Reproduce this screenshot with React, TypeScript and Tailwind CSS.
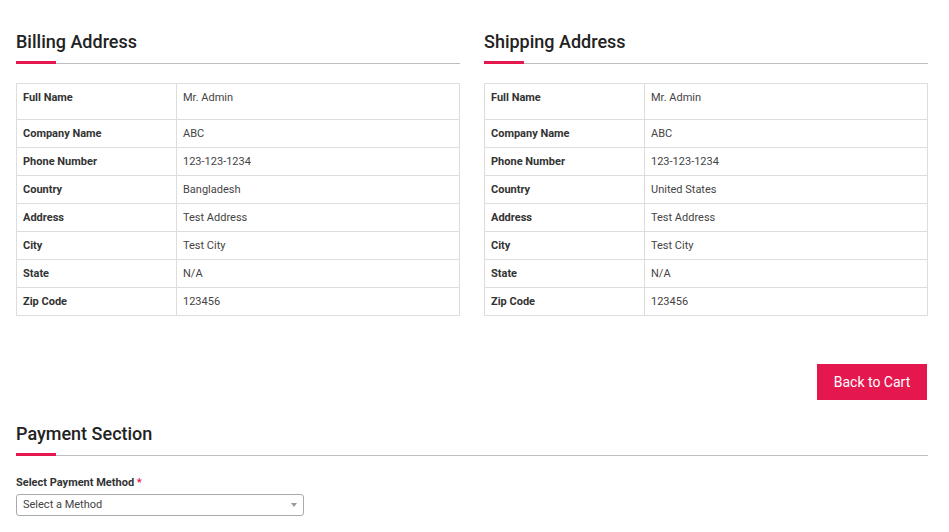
const billing = [
  ['Full Name', 'Mr. Admin'],
  ['Company Name', 'ABC'],
  ['Phone Number', '123-123-1234'],
  ['Country', 'Bangladesh'],
  ['Address', 'Test Address'],
  ['City', 'Test City'],
  ['State', 'N/A'],
  ['Zip Code', '123456'],
];

const shipping = [
  ['Full Name', 'Mr. Admin'],
  ['Company Name', 'ABC'],
  ['Phone Number', '123-123-1234'],
  ['Country', 'United States'],
  ['Address', 'Test Address'],
  ['City', 'Test City'],
  ['State', 'N/A'],
  ['Zip Code', '123456'],
];

const SectionTitle = ({ title }: { title: string }) => (
  <div>
    <h3 className="text-[18px] leading-[24px] font-medium text-[#222]">{title}</h3>
    <div className="mt-[7px] flex items-end">
      <div className="w-10 h-[3px] bg-[#e4174f]" />
      <div className="flex-1 h-px bg-[#bdbdbd]" />
    </div>
  </div>
);

const AddressTable = ({ rows }: { rows: string[][] }) => (
  <table className="w-full mt-[19px] border-collapse border border-[#ddd] text-[11px] text-[#333]">
    <tbody>
      {rows.map(([label, value], i) => (
        <tr key={label} className={i === 0 ? 'h-9' : 'h-7'}>
          <td
            className={`w-40 border border-[#ddd] px-[6px] font-bold ${i === 0 ? 'align-top pt-[6px]' : 'pt-[2px]'}`}
          >
            {label}
          </td>
          <td className={`border border-[#ddd] px-[6px] text-[#444] ${i === 0 ? 'align-top pt-[6px]' : 'pt-[2px]'}`}>
            {value}
          </td>
        </tr>
      ))}
    </tbody>
  </table>
);

export default function App() {
  return (
    <div className="min-h-screen bg-white pl-4 pr-[21px] pt-[30px] pb-4" style={{ fontFamily: 'Roboto, "Liberation Sans", sans-serif' }}>
      <div className="grid grid-cols-2 gap-6">
        <div>
          <SectionTitle title="Billing Address" />
          <AddressTable rows={billing} />
        </div>
        <div>
          <SectionTitle title="Shipping Address" />
          <AddressTable rows={shipping} />
        </div>
      </div>

      <div className="flex justify-end mt-[48px]">
        <button className="h-9 w-[110px] mr-px bg-[#e4174f] text-white text-[14px]">Back to Cart</button>
      </div>

      <div className="mt-[22px]">
        <SectionTitle title="Payment Section" />
        <label className="block mt-[19px] text-[11px] font-bold text-[#333]">
          Select Payment Method <span className="text-[#e4174f]">*</span>
        </label>
        <div className="relative mt-[2px] w-[288px] h-[22px] border border-[#aaa] rounded-[3px] px-[6px] pt-[3px] leading-[14px] text-[11px] text-[#444]">
          Select a Method
          <span className="absolute right-[6px] top-[8px] w-0 h-0 border-l-[3px] border-r-[3px] border-t-[4px] border-l-transparent border-r-transparent border-t-[#999]" />
        </div>
      </div>
    </div>
  );
}
